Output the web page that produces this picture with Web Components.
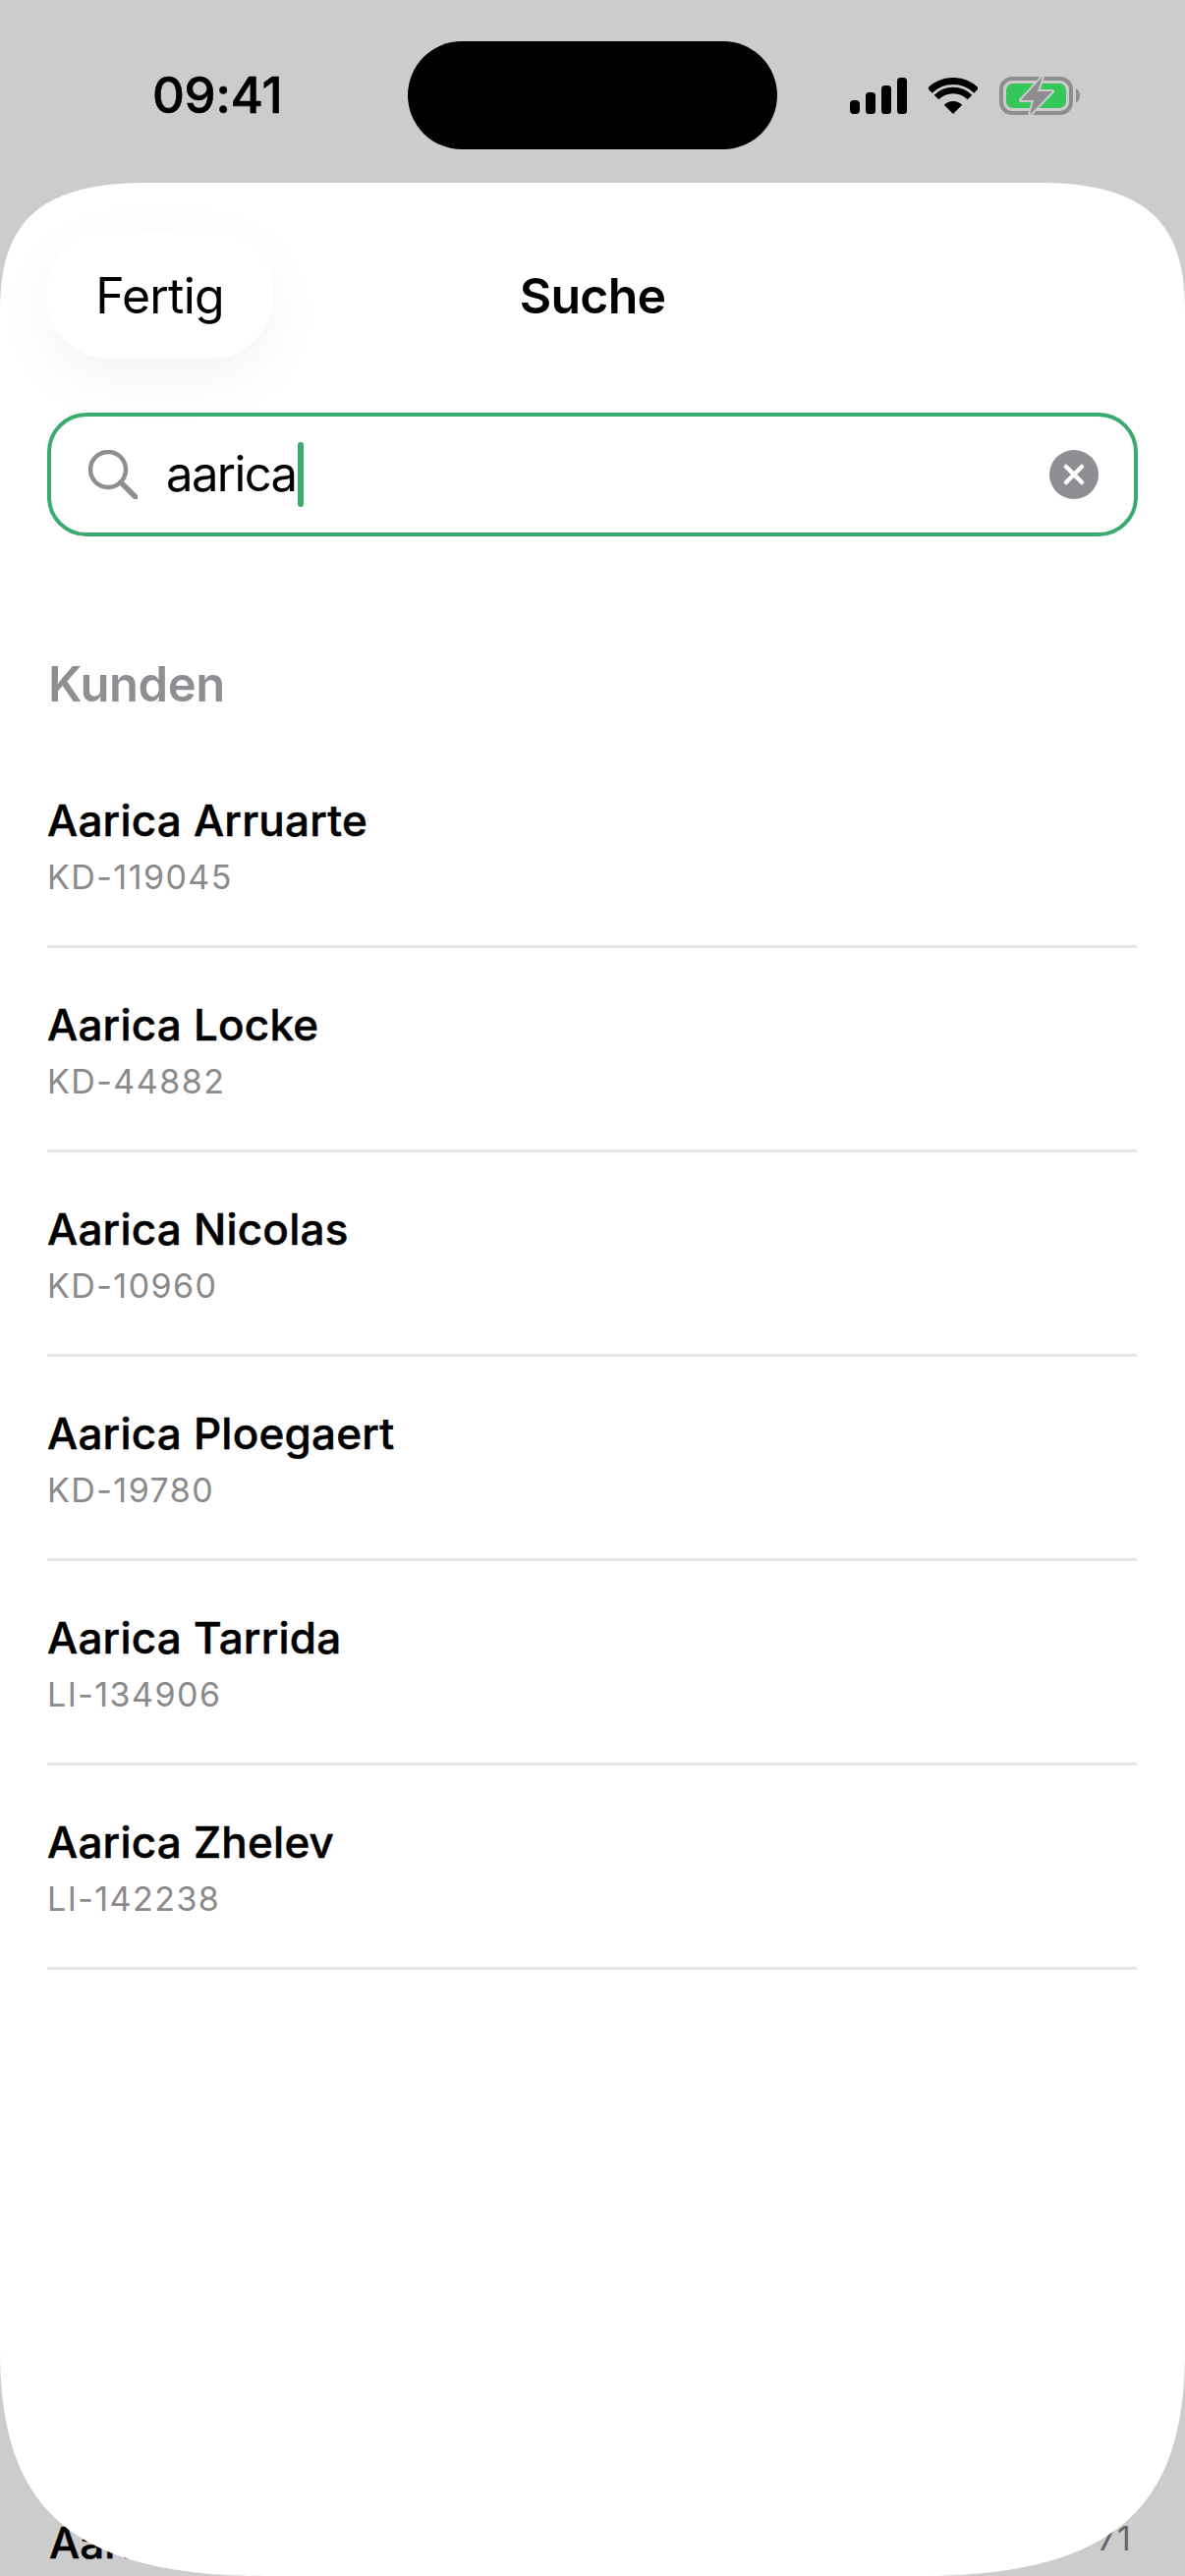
<!DOCTYPE html>
<html lang="de">
<head>
<meta charset="utf-8">
<title>Suche</title>
<style>
  html, body { margin: 0; padding: 0; background: #ccc; }
  body { font-family: Inter, "Noto Sans", sans-serif; color: #000; }
</style>
</head>
<body>
<search-screen>
  <status-bar slot="status"></status-bar>
  <peek-row slot="peek"><span>Aarica</span><span slot="side">71</span></peek-row>
  <search-sheet slot="sheet">
    <sheet-header></sheet-header>
    <search-field value="aarica"></search-field>
    <section-title>Kunden</section-title>
    <customer-row>Aarica Arruarte<span slot="code">KD-119045</span></customer-row>
    <customer-row>Aarica Locke<span slot="code">KD-44882</span></customer-row>
    <customer-row>Aarica Nicolas<span slot="code">KD-10960</span></customer-row>
    <customer-row>Aarica Ploegaert<span slot="code">KD-19780</span></customer-row>
    <customer-row>Aarica Tarrida<span slot="code">LI-134906</span></customer-row>
    <customer-row>Aarica Zhelev<span slot="code">LI-142238</span></customer-row>
  </search-sheet>
</search-screen>

<script>
class SearchScreen extends HTMLElement {
    connectedCallback() {
        this.attachShadow({ mode: 'open' });
        this.shadowRoot.innerHTML = `
            <style>
                :host {
                    display: grid;
                    width: 1206px;
                    height: 2622px;
                    grid-template-rows: 186px 1fr;
                    background: #ccc;
                    overflow: hidden;
                }
                .stack { display: grid; min-height: 0; }
                .stack ::slotted(*) { grid-area: 1 / 1; }
            </style>
            <slot name="status"></slot>
            <div class="stack">
                <slot name="peek"></slot>
                <slot name="sheet"></slot>
            </div>
        `;
    }
}
customElements.define('search-screen', SearchScreen);

class StatusBar extends HTMLElement {
    connectedCallback() {
        this.attachShadow({ mode: 'open' });
        this.shadowRoot.innerHTML = `
            <style>
                :host {
                    display: flex;
                    align-items: center;
                    height: 110px;
                    padding-top: 42px;
                    box-sizing: content-box;
                }
                .left { width: 415px; padding-left: 155px; box-sizing: border-box; }
                .time { font: 500 51px/60px Inter, sans-serif; letter-spacing: -.3px; -webkit-text-stroke: .6px #000; }
                .island { width: 376px; height: 110px; background: #000; border-radius: 56px; }
                .right { display: flex; align-items: center; padding-left: 74px; }
                svg { display: block; }
                .wifi { margin-left: 22px; }
                .batt { margin-left: 22px; }
            </style>
            <div class="left"><span class="time">09:41</span></div>
            <div class="island"></div>
            <div class="right">
                <svg width="58" height="37" viewBox="0 0 58 37" fill="#000">
                    <rect x="0" y="23" width="10" height="14" rx="4"/>
                    <rect x="16" y="15" width="10" height="22" rx="3.5"/>
                    <rect x="32" y="8" width="10" height="29" rx="3.5"/>
                    <rect x="48" y="0" width="10" height="37" rx="3.5"/>
                </svg>
                <svg class="wifi" width="50" height="37" viewBox="0 0 50 37">
                    <path d="M1.3 13.3A33.5 33.5 0 0 1 48.7 13.3" fill="none" stroke="#000" stroke-width="7"/>
                    <path d="M8 20A24 24 0 0 1 42 20" fill="none" stroke="#000" stroke-width="6.5"/>
                    <path d="M25 37L15.8 27.8A13 13 0 0 1 34.2 27.8Z" fill="#000"/>
                </svg>
                <svg class="batt" width="82" height="42" viewBox="0 0 82 42">
                    <rect x="2" y="4" width="71" height="35" rx="11" fill="none" stroke="#8e8e8e" stroke-width="4"/>
                    <rect x="7" y="9" width="61" height="25" rx="7" fill="#34c759"/>
                    <path d="M78 14.5c2.500 .8 4 3.500 4 7s-1.500 6.200-4 7z" fill="#8e8e8e"/>
                    <path d="M44 2L22 26H35L31 41L54 17H39Z" fill="#8e8e8e" stroke="#ccc" stroke-width="4" stroke-linejoin="round" paint-order="stroke"/>
                </svg>
            </div>
        `;
    }
}
customElements.define('status-bar', StatusBar);

class PeekRow extends HTMLElement {
    connectedCallback() {
        this.attachShadow({ mode: 'open' });
        this.shadowRoot.innerHTML = `
            <style>
                :host {
                    display: flex;
                    justify-content: space-between;
                    align-self: end;
                    padding: 0 54px 0 50px;
                    height: 60px;
                    font: 500 44px/52px Inter, sans-serif;
                    -webkit-text-stroke: .5px #000;
                    color: #000;
                }
                .side { font: 400 34px/40px Inter, sans-serif; -webkit-text-stroke: 0; letter-spacing: 1.2px; color: #666; padding-top: 2px; }
            </style>
            <slot></slot>
            <div class="side"><slot name="side"></slot></div>
        `;
    }
}
customElements.define('peek-row', PeekRow);

class SearchSheet extends HTMLElement {
    connectedCallback() {
        this.attachShadow({ mode: 'open' });
        this.shadowRoot.innerHTML = `
            <style>
                :host {
                    display: block;
                    background: #fff;
                    padding: 48px 48px 0;
                    box-sizing: border-box;
                    overflow: hidden;
                    clip-path: path("M0 130C0 40 40 0 150 0L1056 0C1166 0 1206 40 1206 130L1206 2206C1206 2356 1146 2436 936 2436L270 2436C60 2436 0 2356 0 2206Z");
                }
            </style>
            <slot></slot>
        `;
    }
}
customElements.define('search-sheet', SearchSheet);

class SheetHeader extends HTMLElement {
    connectedCallback() {
        this.attachShadow({ mode: 'open' });
        this.shadowRoot.innerHTML = `
            <style>
                :host {
                    display: grid;
                    grid-template-columns: 1fr auto 1fr;
                    align-items: center;
                    height: 131px;
                }
                .done {
                    justify-self: start;
                    display: flex;
                    align-items: center;
                    justify-content: center;
                    width: 231px;
                    height: 131px;
                    margin-left: -1px;
                    border-radius: 64px;
                    background: #fff;
                    box-shadow: 0 20px 60px rgba(0, 0, 0, .05);
                    font: 400 50px/60px Inter, sans-serif;
                    letter-spacing: -.8px;
                }
                .title { font: 600 50px/60px Inter, sans-serif; letter-spacing: -.8px; }
                span { position: relative; top: 1px; }
            </style>
            <div class="done"><span>Fertig</span></div>
            <div class="title"><span>Suche</span></div>
            <div></div>
        `;
    }
}
customElements.define('sheet-header', SheetHeader);

class SearchField extends HTMLElement {
    connectedCallback() {
        this.attachShadow({ mode: 'open' });
        this.shadowRoot.innerHTML = `
            <style>
                :host {
                    display: flex;
                    align-items: center;
                    height: 126px;
                    margin-top: 55px;
                    padding: 0 36px 0 38px;
                    box-sizing: border-box;
                    border: 4px solid #3aab6f;
                    border-radius: 40px;
                }
                svg { display: block; flex: none; }
                .text { font: 400 49px/60px Inter, sans-serif; letter-spacing: -1.6px; margin-left: 29px; }
                .caret { width: 6px; height: 66px; margin-left: 1px; background: #3aab6f; border-radius: 3px; }
                .clear { margin-left: auto; }
            </style>
            <svg width="50" height="50" viewBox="0 0 50 50" fill="none" stroke="#8e8e8e" stroke-width="4.500">
                <circle cx="20" cy="20" r="18"/>
                <path d="M33 33L48 48" stroke-width="5.500" stroke-linecap="round"/>
            </svg>
            <span class="text"></span>
            <div class="caret"></div>
            <svg class="clear" width="50" height="50" viewBox="0 0 50 50">
                <circle cx="25" cy="25" r="25" fill="#8e8e93"/>
                <path d="M17 17L33 33M33 17L17 33" stroke="#fff" stroke-width="4.500" stroke-linecap="round"/>
            </svg>
        `;
        this.shadowRoot.querySelector('.text').textContent = this.getAttribute('value');
    }
}
customElements.define('search-field', SearchField);

class SectionTitle extends HTMLElement {
    connectedCallback() {
        this.attachShadow({ mode: 'open' });
        this.shadowRoot.innerHTML = `
            <style>
                :host {
                    display: block;
                    margin: 121px 0 30px;
                    padding-left: 1px;
                    font: 600 49px/60px Inter, sans-serif;
                    letter-spacing: -.4px;
                    color: #8e8e93;
                }
            </style>
            <slot></slot>
        `;
    }
}
customElements.define('section-title', SectionTitle);

class CustomerRow extends HTMLElement {
    connectedCallback() {
        this.attachShadow({ mode: 'open' });
        this.shadowRoot.innerHTML = `
            <style>
                :host {
                    display: block;
                    height: 208px;
                    box-sizing: border-box;
                    padding-top: 52px;
                    border-bottom: 3px solid #e6e6e6;
                }
                .name { font: 500 44px/52px Inter, sans-serif; letter-spacing: .22px; -webkit-text-stroke: .5px #000; color: #000; }
                .code { margin-top: 12px; font: 400 34px/40px Inter, sans-serif; letter-spacing: 1.45px; color: #8a8a8a; }
            </style>
            <div class="name"><slot></slot></div>
            <div class="code"><slot name="code"></slot></div>
        `;
    }
}
customElements.define('customer-row', CustomerRow);
</script>
</body>
</html>
